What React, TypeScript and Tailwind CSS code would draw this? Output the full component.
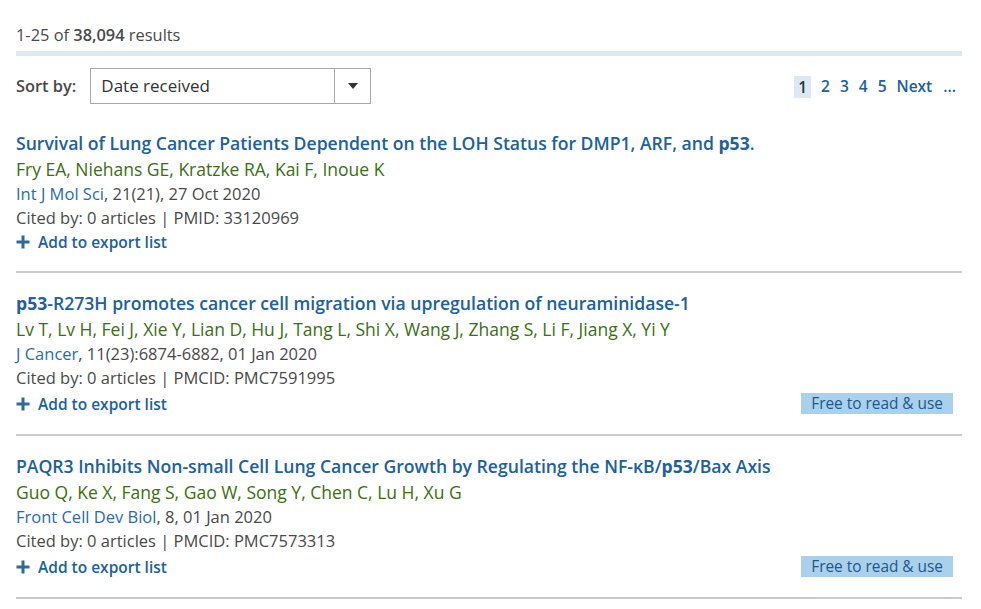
import React from 'react';

interface Result {
  title: React.ReactNode;
  authors: string;
  journal: string;
  rest: string;
  ids: string;
  free?: boolean;
}

const P53 = () => <b className="font-bold">p53</b>;

const results: Result[] = [
  {
    title: (
      <>
        Survival of Lung Cancer Patients Dependent on the LOH Status for DMP1, ARF, and <P53 />.
      </>
    ),
    authors: 'Fry EA, Niehans GE, Kratzke RA, Kai F, Inoue K',
    journal: 'Int J Mol Sci',
    rest: ', 21(21), 27 Oct 2020',
    ids: 'Cited by: 0 articles | PMID: 33120969',
  },
  {
    title: (
      <>
        <P53 />-R273H promotes cancer cell migration via upregulation of neuraminidase-1
      </>
    ),
    authors: 'Lv T, Lv H, Fei J, Xie Y, Lian D, Hu J, Tang L, Shi X, Wang J, Zhang S, Li F, Jiang X, Yi Y',
    journal: 'J Cancer',
    rest: ', 11(23):6874-6882, 01 Jan 2020',
    ids: 'Cited by: 0 articles | PMCID: PMC7591995',
    free: true,
  },
  {
    title: (
      <>
        PAQR3 Inhibits Non-small Cell Lung Cancer Growth by Regulating the NF-κB/<P53 />/Bax Axis
      </>
    ),
    authors: 'Guo Q, Ke X, Fang S, Gao W, Song Y, Chen C, Lu H, Xu G',
    journal: 'Front Cell Dev Biol',
    rest: ', 8, 01 Jan 2020',
    ids: 'Cited by: 0 articles | PMCID: PMC7573313',
    free: true,
  },
];

function PlusIcon() {
  return (
    <svg width="14" height="14" viewBox="0 0 14 14" className="shrink-0">
      <rect x="5.5" y="0.5" width="3" height="13" fill="#2f6a9c" />
      <rect x="0.5" y="5.5" width="13" height="3" fill="#2f6a9c" />
    </svg>
  );
}

function ResultItem({ r }: { r: Result }) {
  return (
    <div className="border-b-2 border-[#cbcbcb] pt-[17px] pb-[17px]">
      <div className="text-[17.6px] leading-[27px] font-semibold text-[#20609c]">{r.title}</div>
      <div className="text-[17.5px] leading-[25px] text-[#3c6e12]">{r.authors}</div>
      <div className="text-[16.5px] leading-[24px] text-[#494949]">
        <span className="text-[#2b6ca3]">{r.journal}</span>
        {r.rest}
      </div>
      <div className="text-[16.5px] leading-[24px] text-[#494949]">{r.ids}</div>
      <div className="flex min-h-[24px] items-center justify-between">
        <div className="flex items-center gap-[8px] text-[15.5px] leading-[24px] font-semibold text-[#20609c]">
          <PlusIcon />
          Add to export list
        </div>
        {r.free && (
          <div className="my-[3px] mr-[9px] bg-[#aad0eb] px-[10px] text-[15.4px] leading-[21px] text-[#20588a]">
            Free to read &amp; use
          </div>
        )}
      </div>
    </div>
  );
}

export default function App() {
  return (
    <div className="min-h-screen bg-white font-['Open_Sans',sans-serif]">
      <div className="ml-[16px] w-[946px] pt-[24px]">
        <div className="text-[16.4px] leading-[22px] text-[#494949]">
          1-25 of <b className="font-semibold">38,094</b> results
        </div>
        <div className="mt-[5px] h-[5px] bg-[#dce9f4]" />
        <div className="mt-[12px] flex items-center justify-between">
          <div className="flex items-center gap-[14px]">
            <span className="text-[16.4px] font-semibold text-[#494949]">Sort by:</span>
            <div className="flex h-[36px] w-[281px] items-stretch border border-[#a8a8a8]">
              <div className="flex flex-1 items-center pl-[10px] text-[17px] text-[#333]">Date received</div>
              <div className="flex w-[36px] items-center justify-center border-l border-[#a8a8a8]">
                <svg width="10" height="6" viewBox="0 0 10 6">
                  <path d="M0 0 H10 L5 6 Z" fill="#333" />
                </svg>
              </div>
            </div>
          </div>
          <div className="mr-[6px] flex items-center gap-[10px] pt-[1px] text-[15.5px] font-semibold text-[#20609c]">
            <span className="bg-[#dce9f4] px-[4px] leading-[22px] text-[#333]">1</span>
            <span>2</span>
            <span>3</span>
            <span>4</span>
            <span>5</span>
            <span>Next</span>
            <span className="ml-[1px]">...</span>
          </div>
        </div>
        <div className="mt-[9px]">
          {results.map((r, i) => (
            <ResultItem key={i} r={r} />
          ))}
        </div>
      </div>
    </div>
  );
}
